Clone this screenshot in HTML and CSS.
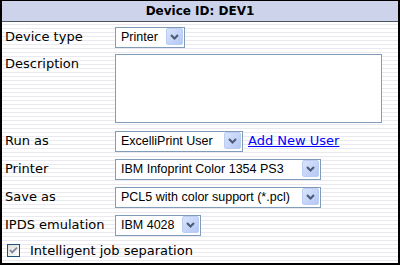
FILE: index.html
```html
<!DOCTYPE html>
<html lang="en">
<head>
    <meta charset="UTF-8">
    <title>Device DEV1</title>
    <link rel="stylesheet" href="styles.css">
</head>
<body>
    <div class="panel">
        <div class="panel-title">Device ID: DEV1</div>

        <div class="form">
            <label class="label" for="deviceType">Device type</label>
            <div class="field">
                <span class="select w-type">
                    <select id="deviceType"><option>Printer</option></select>
                    <span class="arrow"><svg width="9" height="6" viewBox="0 0 9 6"><path d="M1 1 L4.5 4.5 L8 1" fill="none" stroke="#4b5a78" stroke-width="2"/></svg></span>
                </span>
            </div>

            <label class="label label-top" for="description">Description</label>
            <div class="field">
                <textarea id="description"></textarea>
            </div>

            <label class="label" for="runAs">Run as</label>
            <div class="field">
                <span class="select w-user">
                    <select id="runAs"><option>ExcelliPrint User</option></select>
                    <span class="arrow"><svg width="9" height="6" viewBox="0 0 9 6"><path d="M1 1 L4.5 4.5 L8 1" fill="none" stroke="#4b5a78" stroke-width="2"/></svg></span>
                </span>
                <a href="#" class="add-link">Add New User</a>
            </div>

            <label class="label" for="printer">Printer</label>
            <div class="field">
                <span class="select w-wide">
                    <select id="printer"><option>IBM Infoprint Color 1354 PS3</option></select>
                    <span class="arrow"><svg width="9" height="6" viewBox="0 0 9 6"><path d="M1 1 L4.5 4.5 L8 1" fill="none" stroke="#4b5a78" stroke-width="2"/></svg></span>
                </span>
            </div>

            <label class="label" for="saveAs">Save as</label>
            <div class="field">
                <span class="select w-wide">
                    <select id="saveAs"><option>PCL5 with color support (*.pcl)</option></select>
                    <span class="arrow"><svg width="9" height="6" viewBox="0 0 9 6"><path d="M1 1 L4.5 4.5 L8 1" fill="none" stroke="#4b5a78" stroke-width="2"/></svg></span>
                </span>
            </div>

            <label class="label" for="ipds">IPDS emulation</label>
            <div class="field">
                <span class="select w-ipds">
                    <select id="ipds"><option>IBM 4028</option></select>
                    <span class="arrow"><svg width="9" height="6" viewBox="0 0 9 6"><path d="M1 1 L4.5 4.5 L8 1" fill="none" stroke="#4b5a78" stroke-width="2"/></svg></span>
                </span>
            </div>
        </div>

        <label class="check">
            <svg class="check-box" width="13" height="13" viewBox="0 0 13 13">
                <defs>
                    <linearGradient id="cbFill" x1="0" y1="0" x2="1" y2="1">
                        <stop offset="0" stop-color="#dcdcd7"/>
                        <stop offset="1" stop-color="#ffffff"/>
                    </linearGradient>
                </defs>
                <rect x="0.5" y="0.5" width="12" height="12" fill="url(#cbFill)" stroke="#1c5180"/>
                <path d="M3 6 L5.2 8.4 L10 3.6" fill="none" stroke="#7d8a9a" stroke-width="1.8"/>
            </svg>
            <span>Intelligent job separation</span>
        </label>
    </div>
</body>
</html>
```

FILE: styles.css
```css
/* Base da página */
body {
    margin: 0;
    font-family: "DejaVu Sans", Verdana, sans-serif;
    color: #000;
}

/* Caixa principal */
.panel {
    width: 400px;
    height: 265px;
    box-sizing: border-box;
    border: 2px solid #000;
    border-top-width: 1px;
    background: repeating-linear-gradient(to bottom, #ffffff 0, #ffffff 3px, #e9e9ef 3px, #e9e9ef 4px);
}

.panel-title {
    height: 20px;
    line-height: 20px;
    background: #ccd3eb;
    border-bottom: 1px solid #4c5260;
    text-align: center;
    font-weight: bold;
    font-size: 12px;
}

/* Linhas do formulário */
.form {
    display: grid;
    grid-template-columns: 110px 1fr;
    row-gap: 7px;
    padding: 4px 0 0 3px;
}

.label {
    display: flex;
    align-items: center;
    font-size: 13px;
}

.label-top {
    align-items: flex-start;
    padding-top: 2px;
}

.field {
    display: flex;
    align-items: center;
}

/* Campos de seleção */
.select {
    position: relative;
    display: inline-block;
    height: 21px;
}

.select select {
    appearance: none;
    -webkit-appearance: none;
    width: 100%;
    height: 21px;
    margin: 0;
    box-sizing: border-box;
    border: 1px solid #7f9db9;
    border-radius: 0;
    background: #fff;
    padding: 0 0 0 5px;
    font-family: "Liberation Sans", Arial, sans-serif;
    font-size: 12.5px;
    color: #000;
    outline: none;
}

.select .arrow {
    position: absolute;
    top: 2px;
    right: 2px;
    width: 15px;
    height: 15px;
    border: 1px solid #bccdf3;
    border-radius: 2px;
    background: linear-gradient(135deg, #dae4fc, #b4c7f4);
    display: flex;
    align-items: center;
    justify-content: center;
    pointer-events: none;
}

.w-type { width: 70px; }
.w-user { width: 128px; }
.w-wide { width: 206px; }
.w-ipds { width: 86px; }

textarea {
    width: 267px;
    height: 69px;
    box-sizing: border-box;
    border: 1px solid #7f9db9;
    margin: 0;
    resize: none;
    background: #fff;
}

.add-link {
    margin-left: 5px;
    font-size: 13px;
    color: #0000ff;
    text-decoration: underline;
}

/* Caixa de seleção no rodapé */
.check {
    display: flex;
    align-items: center;
    margin: 8px 0 0 5px;
    font-size: 13px;
}

.check-box {
    margin-right: 10px;
}
```
